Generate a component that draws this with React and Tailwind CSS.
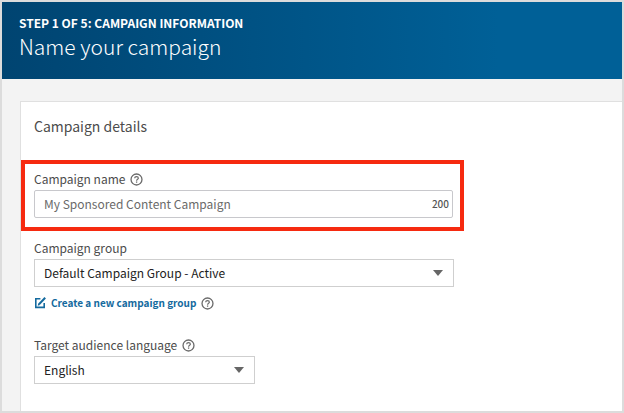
import React from "react";

function HelpIcon() {
  return (
    <svg viewBox="0 0 14 14" className="size-[13px] shrink-0" fill="none" stroke="#6a6a6a" aria-hidden="true">
      <circle cx="7" cy="7" r="5.9" strokeWidth="1.4" />
      <path d="M5 5.7C5.1 4.5 5.9 3.9 7 3.9s2 .6 2 1.7C9 6.8 7.1 6.8 7.1 8.3" strokeWidth="1.3" />
      <path d="M7.1 9.1v1.4" strokeWidth="1.4" />
    </svg>
  );
}

function ComposeIcon() {
  return (
    <svg viewBox="0 0 12 12" className="size-3 shrink-0" fill="none" stroke="#146a9e" aria-hidden="true">
      <path d="M6.4 1.8H1.8v8.6h8.4V6" strokeWidth="1.6" />
      <path d="M5 7.2 11.2.8" strokeWidth="2" />
      <path d="M3.7 8.7l.5-2.4 1.8 1.8z" fill="#146a9e" stroke="none" />
    </svg>
  );
}

function FieldLabel({ htmlFor, children, help }) {
  return (
    <div className="mb-px flex items-center gap-[5px]">
      <label htmlFor={htmlFor} className="text-[12px] leading-5 text-[#4c4c4c]">
        {children}
      </label>
      {help && (
        <button type="button" aria-label={help}>
          <HelpIcon />
        </button>
      )}
    </div>
  );
}

function Select({ id, options }) {
  return (
    <div className="relative">
      <select
        id={id}
        className="block h-7 w-full appearance-none border border-[#cfcfcf] bg-white pr-8 pl-[9px] text-[12px] leading-5 text-[#222]"
      >
        {options.map((option) => (
          <option key={option}>{option}</option>
        ))}
      </select>
      <svg
        viewBox="0 0 10 6"
        className="pointer-events-none absolute top-[11px] right-[11px] h-1.5 w-2.5"
        fill="#666"
        aria-hidden="true"
      >
        <path d="M0 0h10L5 6z" />
      </svg>
    </div>
  );
}

export default function App() {
  return (
    <div className="flex min-h-screen flex-col border-2 border-[#dcdcdc] bg-[#f3f3f3] font-['Noto_Sans_CJK_SC',sans-serif]">
      <header className="bg-linear-to-r from-[#004471] to-[#006097] to-80% px-[17px] pt-3 pb-[19px] text-white">
        <p className="text-[12px] leading-[18px] font-bold">STEP 1 OF 5: CAMPAIGN INFORMATION</p>
        <h1 className="text-[21px] leading-7 font-light">Name your campaign</h1>
      </header>
      <main className="flex grow flex-col pt-[22px] pl-[18px]">
        <form className="grow border-t border-l border-[#e0e0e0] bg-white pt-[14px]">
          <h2 className="px-[13px] text-[14px] leading-5 text-[#4c4c4c]">Campaign details</h2>

          <div className="mt-6 max-w-[443px] border-4 border-[#f62a10] pt-[5px] pr-[7px] pb-[9px] pl-[9px]">
            <FieldLabel htmlFor="campaign-name" help="About campaign name">
              Campaign name
            </FieldLabel>
            <div className="flex h-7 items-center rounded-xs border border-[#c8c8cc] bg-white pr-[3px] pl-[9px]">
              <input
                id="campaign-name"
                type="text"
                maxLength={200}
                placeholder="My Sponsored Content Campaign"
                className="min-w-0 grow text-[12px] leading-5 outline-none placeholder:text-[#6a6a6a]"
              />
              <span className="text-[10px] leading-5 font-medium text-[#555]">200</span>
            </div>
          </div>

          <div className="mt-[7px] max-w-[433px] pl-[13px]">
            <FieldLabel htmlFor="campaign-group">Campaign group</FieldLabel>
            <Select id="campaign-group" options={["Default Campaign Group - Active"]} />
            <div className="mt-[6px] flex items-center gap-[5px]">
              <a href="#new-group" className="flex items-center gap-[5px] text-[10px] leading-5 font-bold text-[#146a9e]">
                <ComposeIcon />
                Create a new campaign group
              </a>
              <button type="button" aria-label="About campaign groups">
                <HelpIcon />
              </button>
            </div>
          </div>

          <div className="mt-[22px] mb-6 max-w-[234px] pl-[13px]">
            <FieldLabel htmlFor="language" help="About target audience language">
              Target audience language
            </FieldLabel>
            <Select id="language" options={["English"]} />
          </div>
        </form>
      </main>
    </div>
  );
}
